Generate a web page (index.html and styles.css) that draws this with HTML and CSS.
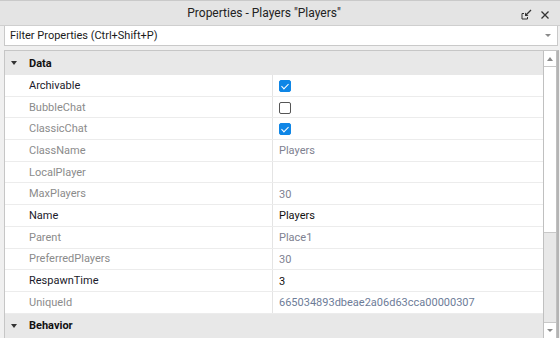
FILE: index.html
```html
<!DOCTYPE html>
<html>
<head>
<meta charset="utf-8">
<link rel="stylesheet" href="styles.css">
</head>
<body>
<div class="window">
  <div class="titlebar">
    <span class="title">Properties - Players "Players"</span>
    <div class="tools">
      <svg class="ico" width="11" height="11" viewBox="0 0 11 11">
        <path d="M1 4.5 V10 H6.5" fill="none" stroke="#333" stroke-width="1"/>
        <path d="M1 4.5 H3 M6.5 10 V8" fill="none" stroke="#333" stroke-width="1"/>
        <path d="M10 1 L5 6" stroke="#333" stroke-width="1.2"/>
        <path d="M4 3.5 V7 H7.5 Z" fill="#333"/>
      </svg>
      <svg class="ico" width="10" height="10" viewBox="0 0 10 10">
        <path d="M1.5 1.5 L8.5 8.5 M8.5 1.5 L1.5 8.5" stroke="#333" stroke-width="1.3"/>
      </svg>
    </div>
  </div>
  <div class="filter">
    <span class="filter-text">Filter Properties (Ctrl+Shift+P)</span>
    <span class="tri-down small"></span>
  </div>
  <div class="grid">
    <div class="rows">
      <div class="cat"><span class="tri-down"></span><span class="cat-name">Data</span></div>
      <div class="row"><div class="name on">Archivable</div><div class="val"><span class="cb checked"></span></div></div>
      <div class="row"><div class="name">BubbleChat</div><div class="val"><span class="cb"></span></div></div>
      <div class="row"><div class="name">ClassicChat</div><div class="val"><span class="cb checked"></span></div></div>
      <div class="row"><div class="name">ClassName</div><div class="val ro">Players</div></div>
      <div class="row"><div class="name">LocalPlayer</div><div class="val ro"></div></div>
      <div class="row"><div class="name">MaxPlayers</div><div class="val ro">30</div></div>
      <div class="row"><div class="name on">Name</div><div class="val on">Players</div></div>
      <div class="row"><div class="name">Parent</div><div class="val ro">Place1</div></div>
      <div class="row"><div class="name">PreferredPlayers</div><div class="val ro">30</div></div>
      <div class="row"><div class="name on">RespawnTime</div><div class="val on">3</div></div>
      <div class="row"><div class="name">UniqueId</div><div class="val ro id">665034893dbeae2a06d63cca00000307</div></div>
      <div class="cat"><span class="tri-down"></span><span class="cat-name">Behavior</span></div>
    </div>
    <div class="scrollbar">
      <div class="sb-btn"><span class="tri-up"></span></div>
      <div class="sb-thumb"></div>
      <div class="sb-track"></div>
      <div class="sb-btn"><span class="tri-down small"></span></div>
    </div>
  </div>
</div>
</body>
</html>
```

FILE: styles.css
```css
* { box-sizing: border-box; }
html, body { margin: 0; padding: 0; }
body {
  width: 560px;
  height: 338px;
  overflow: hidden;
  background: #f0f0f0;
  font-family: Roboto, "Noto Sans", sans-serif;
  font-size: 11px;
  color: #1b1b1b;
}
.window {
  display: flex;
  flex-direction: column;
  height: 338px;
}
.titlebar {
  height: 26px;
  background: #e4e4e4;
  border-top: 1px solid #c9c9c9;
  border-bottom: 1px solid #cfcfcf;
  display: flex;
  align-items: center;
  justify-content: center;
  padding-right: 32px;
  position: relative;
}
.title {
  font-size: 12px;
  color: #222;
}
.tools {
  position: absolute;
  right: 10px;
  top: 8px;
  display: flex;
  gap: 8px;
  align-items: center;
}
.ico { display: block; }
.filter {
  height: 20px;
  margin: 0 2px 0 4px;
  background: #fff;
  border: 1px solid #c9c9c9;
  border-top: none;
  display: flex;
  align-items: center;
  justify-content: space-between;
  padding: 0 6px 0 5px;
}
.filter-text { color: #1b1b1b; }
.tri-down {
  width: 0; height: 0;
  border-left: 3.5px solid transparent;
  border-right: 3.5px solid transparent;
  border-top: 4px solid #333;
}
.tri-down.small {
  border-left-width: 3px;
  border-right-width: 3px;
  border-top: 3px solid #8a8a8a;
}
.tri-up {
  width: 0; height: 0;
  border-left: 3.5px solid transparent;
  border-right: 3.5px solid transparent;
  border-bottom: 4px solid #8a8a8a;
}
.grid {
  flex: 1;
  margin: 4px 1px 0 4px;
  background: #fff;
  border: 1px solid #c6c6c6;
  border-right: 2px solid #b4b4b4;
  border-bottom: none;
  display: flex;
  overflow: hidden;
}
.rows {
  flex: 1;
  display: flex;
  flex-direction: column;
}
.cat {
  height: 24px;
  flex: none;
  background: #e8e8e8;
  display: flex;
  align-items: center;
  padding-left: 6px;
}
.cat .tri-down { margin-right: 12px; }
.cat-name { font-weight: bold; color: #111; }
.row {
  height: 21.7px;
  flex: none;
  display: flex;
  border-bottom: 1px solid #ececec;
  padding-top: 1px;
}
.name {
  width: 268px;
  padding-left: 24px;
  display: flex;
  align-items: center;
  color: #8b8b8b;
  border-right: 1px solid #e4e4e4;
  margin-top: -1px;
}
.name.on { color: #1a1a2a; }
.val {
  flex: 1;
  padding-left: 6px;
  display: flex;
  align-items: center;
}
.val.ro { color: #7e8190; }
.val.id { color: #6d7c98; }
.val.on { color: #111; }
.cb {
  width: 12px;
  height: 12px;
  border: 1px solid #555;
  border-radius: 2px;
  background: #fff;
  position: relative;
}
.cb.checked {
  background: #0f86e6;
  border-color: #0f86e6;
}
.cb.checked::after {
  content: "";
  position: absolute;
  left: 3px;
  top: 1px;
  width: 3px;
  height: 6px;
  border-right: 1.6px solid #fff;
  border-bottom: 1.6px solid #fff;
  transform: rotate(45deg);
}
.scrollbar {
  width: 14px;
  flex: none;
  display: flex;
  flex-direction: column;
  border-left: 1px solid #c0c0c0;
  border-right: 1px solid #c0c0c0;
  background: #fff;
}
.sb-btn {
  height: 15px;
  flex: none;
  display: flex;
  align-items: center;
  justify-content: center;
  background: #fff;
}
.sb-thumb {
  height: 167px;
  flex: none;
  background: #fff;
  border-top: 1px solid #c8c8c8;
  border-bottom: 1px solid #c8c8c8;
}
.sb-track {
  flex: 1;
  background: #e8e8e8;
  border-bottom: 1px solid #c8c8c8;
}
```
